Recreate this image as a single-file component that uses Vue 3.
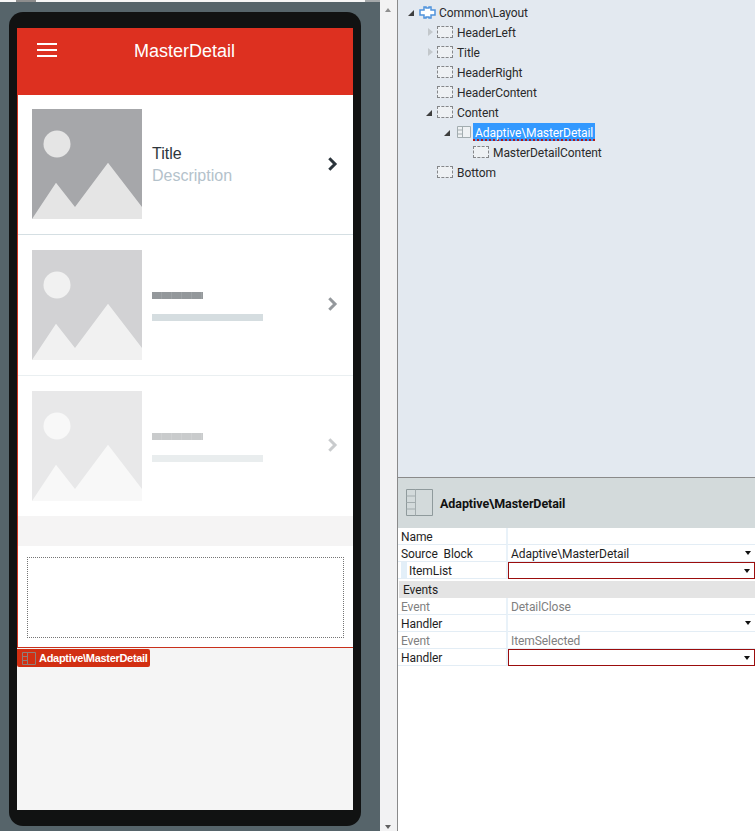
<script setup>
const items = [
  { id: 1, cls: 'full', title: 'Title', desc: 'Description' },
  { id: 2, cls: 'mid' },
  { id: 3, cls: 'faint' }
]
const tree = [
  { label: 'Common\\Layout', depth: 0, arrow: 'open', icon: 'puzzle' },
  { label: 'HeaderLeft', depth: 1, arrow: 'closed', icon: 'dash' },
  { label: 'Title', depth: 1, arrow: 'closed', icon: 'dash' },
  { label: 'HeaderRight', depth: 1, arrow: '', icon: 'dash' },
  { label: 'HeaderContent', depth: 1, arrow: '', icon: 'dash' },
  { label: 'Content', depth: 1, arrow: 'open', icon: 'dash' },
  { label: 'Adaptive\\MasterDetail', depth: 2, arrow: 'open', icon: 'block', selected: true },
  { label: 'MasterDetailContent', depth: 3, arrow: '', icon: 'dash' },
  { label: 'Bottom', depth: 1, arrow: '', icon: 'dash' }
]
const props = [
  { k: 'Name', v: '' },
  { k: 'Source Block', v: 'Adaptive\\MasterDetail', drop: true },
  { k: 'ItemList', v: '', drop: true, err: true, indent: true },
  { section: 'Events' },
  { k: 'Event', v: 'DetailClose', dim: true },
  { k: 'Handler', v: '', drop: true },
  { k: 'Event', v: 'ItemSelected', dim: true },
  { k: 'Handler', v: '', drop: true, err: true }
]
</script>

<template>
  <div class="app">
    <section class="canvas">
      <div class="strip"><i class="strip-tab"></i><i class="strip-end"></i></div>
      <div class="phone">
        <div class="screen">
          <header class="bar">
            <div class="burger"><i></i><i></i><i></i></div>
            <div class="bar-title">MasterDetail</div>
          </header>
          <div class="content">
            <div v-for="it in items" :key="it.id" class="item" :class="it.cls">
              <svg class="thumb" viewBox="0 0 110 110" width="110" height="110">
                <rect width="110" height="110" fill="#a6a7aa" />
                <circle cx="25" cy="35" r="13.500" fill="#e5e5e5" />
                <path d="M0 110 L24 73.700 L43 98 L76 53.700 L110 98 V110 Z" fill="#e5e5e5" />
              </svg>
              <div class="text">
                <template v-if="it.title">
                  <div class="t">{{ it.title }}</div>
                  <div class="d">{{ it.desc }}</div>
                </template>
                <template v-else>
                  <div class="ph1"></div>
                  <div class="ph2"></div>
                </template>
              </div>
              <svg class="chev" viewBox="0 0 12 14" width="12" height="14">
                <path d="M2.300 1.300 L8 7 L2.300 12.700" fill="none" stroke="#2b343b" stroke-width="3" />
              </svg>
            </div>
            <div class="gap"></div>
            <div class="slot-wrap"><div class="slot"></div></div>
          </div>
          <div class="rest">
            <div class="tag">
              <svg width="14" height="13" viewBox="0 0 14 13">
                <path d="M.5.5h13v12H.5zM5.500.5v12M.5 4.500h5M.5 8.500h5" fill="none" stroke="#8f7f7a" />
              </svg>
              <span>Adaptive\MasterDetail</span>
            </div>
          </div>
        </div>
      </div>
    </section>

    <div class="scroll">
      <span class="up"></span>
      <span class="down"></span>
    </div>

    <aside class="side">
      <div class="tree">
        <div v-for="n in tree" :key="n.label" class="node" :class="'d' + n.depth">
          <span class="arrow" :class="n.arrow"></span>
          <svg v-if="n.icon === 'puzzle'" class="ico" width="17" height="13" viewBox="0 0 17 13">
            <path d="M5 1h2v1h3V1h2v3h4v5h-4v3h-2v-1H7v1H5V9H1V4h4z" fill="#fff" stroke="#4f93dc" stroke-width="1.500" />
          </svg>
          <svg v-else-if="n.icon === 'block'" class="ico" width="14" height="12" viewBox="0 0 14 12">
            <path d="M.5.5h13v11H.5z" fill="#eef1f3" stroke="#a3adb0" />
            <path d="M5.500.5v11M.5 4h5M.5 8h5" fill="none" stroke="#a3adb0" />
          </svg>
          <span v-else class="ico dash"></span>
          <span class="lbl" :class="{ sel: n.selected }">{{ n.label }}</span>
        </div>
      </div>

      <div class="panel">
        <div class="panel-head">
          <svg width="28" height="28" viewBox="0 0 28 28">
            <path d="M.5.5h26v26H.5z" fill="#d3dadb" stroke="#8f9a9c" />
            <path d="M9.500.5v26M.5 7h9M.5 13.500h9M.5 20h9" fill="none" stroke="#a3acae" />
          </svg>
          <strong>Adaptive\MasterDetail</strong>
        </div>
        <div class="props">
          <template v-for="(p, i) in props" :key="i">
            <div v-if="p.section" class="section">{{ p.section }}</div>
            <div v-else class="row" :class="{ dim: p.dim }">
              <div class="k" :class="{ indent: p.indent }"><span>{{ p.k }}</span></div>
              <div class="v" :class="{ err: p.err }">
                <span>{{ p.v }}</span>
                <i v-if="p.drop" class="caret"></i>
              </div>
            </div>
          </template>
        </div>
      </div>
    </aside>
  </div>
</template>

<style>
html, body { margin: 0; padding: 0; }
</style>

<style scoped>
.app {
  width: 755px;
  height: 831px;
  display: flex;
  overflow: hidden;
  background: #fff;
  font-family: Roboto, sans-serif;
}
.canvas {
  width: 380px;
  height: 831px;
  box-sizing: border-box;
  background: #56646a;
}
.strip {
  height: 2px;
  display: flex;
  background: #f7f7f7;
  margin-bottom: 10px;
}
.strip-tab { width: 20px; margin-left: 16px; background: #8d8d8d; }
.strip-end { width: 15px; margin-left: auto; background: #a4a8aa; }
.phone {
  width: 352px;
  height: 814px;
  margin-left: 9px;
  box-sizing: border-box;
  padding: 16px 8px;
  background: #111212;
  border-radius: 14px;
}
.screen {
  height: 782px;
  display: flex;
  flex-direction: column;
  background: #f5f5f5;
  font-family: "Liberation Sans", sans-serif;
}
.bar {
  height: 67px;
  flex: none;
  position: relative;
  background: #dd3020;
  color: #fff;
}
.burger {
  position: absolute;
  left: 20px;
  top: 15px;
  width: 20px;
  display: flex;
  flex-direction: column;
  gap: 4px;
}
.burger i { display: block; height: 2px; background: #fff; }
.bar-title {
  padding-top: 11px;
  text-align: center;
  font-size: 18px;
  line-height: 24px;
  margin-left: -1px;
}
.content {
  flex: none;
  height: 553px;
  display: flex;
  flex-direction: column;
  box-sizing: border-box;
  border-left: 1px solid #d0341f;
  border-bottom: 1px solid #c9301b;
  background: #fff;
}
.item {
  height: 140px;
  flex: none;
  box-sizing: border-box;
  display: flex;
  align-items: flex-start;
  padding: 14px 14px 0 14px;
  border-bottom: 1px solid #d5dfe3;
  background: #fff;
}
.item + .item { height: 141px; padding-top: 15px; }
.item.faint { border-bottom: 0; height: 140px; }
.item.mid .thumb, .item.mid .chev { opacity: .5; }
.item.faint .thumb, .item.faint .chev { opacity: .25; }
.item.mid { border-bottom-color: #eaeff1; }
.thumb { flex: none; display: block; }
.text { margin-left: 10px; flex: 1; padding-top: 34px; }
.t { font-size: 16px; line-height: 22px; color: #2e363c; }
.d { font-size: 16px; line-height: 22px; color: #b4c2cb; }
.chev { flex: none; margin-top: 48px; }
.item + .item .chev { margin-top: 47px; }
.ph1 {
  width: 51px;
  height: 7px;
  margin-top: 8px;
  background: repeating-linear-gradient(90deg, #94989b 0 9px, #9ea2a5 9px 10px);
}
.ph2 { width: 111px; height: 7px; margin-top: 15px; background: #d5dde0; }
.faint .ph1 { background: repeating-linear-gradient(90deg, #c9cbcc 0 9px, #cfd1d2 9px 10px); }
.faint .ph2 { background: #e9edee; }
.gap { height: 30px; flex: none; background: #f5f4f4; }
.slot-wrap { flex: 1; padding: 11px 9px 9px 9px; background: #fff; }
.slot { height: 81px; box-sizing: border-box; border: 1px dotted #757575; }
.rest { flex: 1; padding-top: 1px; }
.tag {
  width: 133px;
  height: 18px;
  display: flex;
  align-items: center;
  gap: 3px;
  box-sizing: border-box;
  padding-left: 5px;
  background: #d22f12;
  color: #fff;
  border-radius: 0 2px 2px 2px;
  font-size: 11px;
  font-weight: 700;
  letter-spacing: -.3px;
  white-space: nowrap;
}
.tag span { line-height: 18px; }
.scroll {
  width: 18px;
  flex: none;
  box-sizing: border-box;
  position: relative;
  background: #f2f2f3;
  border-right: 1px solid #8a8a8a;
}
.up, .down {
  position: absolute;
  left: 5px;
  width: 0;
  height: 0;
  border-left: 3.500px solid transparent;
  border-right: 3.500px solid transparent;
}
.up { top: 8px; border-bottom: 4px solid #8f8f8f; }
.down { bottom: 2px; border-top: 4px solid #606060; }
.side {
  flex: 1;
  display: flex;
  flex-direction: column;
  min-width: 0;
  color: #2a2a2a;
  font-size: 12px;
  letter-spacing: -.08px;
  word-spacing: 3px;
}
.tree {
  height: 478px;
  flex: none;
  box-sizing: border-box;
  padding-top: 2px;
  background: #e3e9f0;
  border-bottom: 1px solid #8a8a8a;
}
.node { height: 20px; display: flex; align-items: center; position: relative; }
.d0 { padding-left: 21px; }
.d1 { padding-left: 39px; }
.d2 { padding-left: 59px; }
.d3 { padding-left: 75px; }
.arrow { width: 0; }
.ico { flex: none; display: block; }
.dash {
  width: 16px;
  height: 12px;
  box-sizing: border-box;
  border: 1px dashed #85878a;
  background: #eef1f4;
}
.d0 .ico { margin-right: 3px; }
.d1 .ico, .d3 .ico { margin-right: 4px; }
.d2 .ico { margin-right: 2px; }
.arrow.open::before, .arrow.closed::before {
  content: "";
  position: absolute;
  width: 0;
  height: 0;
}
.arrow.open::before {
  top: 8px;
  margin-left: -11px;
  border-bottom: 6px solid #3e3e3e;
  border-left: 6px solid transparent;
}
.d2 .arrow.open::before { margin-left: -13px; }
.arrow.closed::before {
  margin-left: -9px;
  top: 6px;
  border-top: 4px solid transparent;
  border-bottom: 4px solid transparent;
  border-left: 5px solid #c3c8cc;
}
.lbl { padding-top: 2px; line-height: 17px; white-space: nowrap; }
.lbl.sel {
  padding: 3px 2px 0;
  background: #3399ff;
  color: #fff;
  border-bottom: 2px dotted #b31b1b;
  line-height: 14px;
  height: 13px;
}
.panel { flex: 1; display: flex; flex-direction: column; background: #fff; }
.panel-head {
  height: 50px;
  flex: none;
  display: flex;
  align-items: center;
  gap: 6px;
  padding-left: 8px;
  background: #d3dadb;
  color: #111;
}
.panel-head strong { font-size: 12.500px; font-weight: 700; }
.row { height: 17px; display: flex; box-sizing: border-box; line-height: 18px; color: #1e1e1e; }
.k {
  width: 110px;
  flex: none;
  box-sizing: border-box;
  padding-left: 3px;
  border-bottom: 1px solid #e3edf5;
  border-right: 2px solid #e9f2f9;
}
.k.indent span {
  display: block;
  height: 16px;
  padding-left: 2px;
  border-left: 6px solid #e3eff8;
}
.v {
  flex: 1;
  position: relative;
  box-sizing: border-box;
  padding-left: 3px;
  border-bottom: 1px solid #e3edf5;
}
.v.err { border: 1px solid #9b0d0d; padding-left: 2px; }
.row.dim { color: #808080; }
.caret {
  position: absolute;
  right: 4px;
  top: 6px;
  border-left: 3.500px solid transparent;
  border-right: 3.500px solid transparent;
  border-top: 4px solid #111;
}
.section {
  height: 17px;
  line-height: 18px;
  margin: 2px 0 0 1px;
  padding-left: 4px;
  background: #e4e4e4;
  color: #1e1e1e;
}
</style>
